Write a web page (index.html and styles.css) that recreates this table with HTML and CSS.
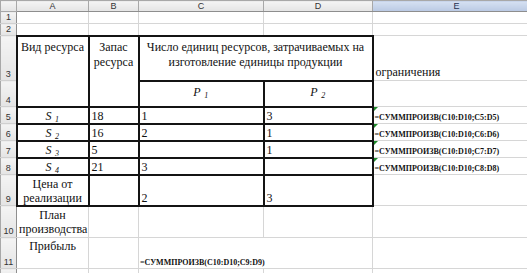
FILE: index.html
```html
<!DOCTYPE html>
<html>
<head>
<meta charset="utf-8">
<link rel="stylesheet" href="styles.css">
</head>
<body>
<table class="sheet">
  <colgroup>
    <col class="c-rh"><col class="c-a"><col class="c-b"><col class="c-c"><col class="c-d"><col class="c-e">
  </colgroup>
  <tr class="r-h">
    <th class="corner"></th><th class="ch">A</th><th class="ch">B</th><th class="ch">C</th><th class="ch">D</th><th class="ch sel">E</th>
  </tr>
  <tr class="r-1"><th class="rh">1</th><td></td><td></td><td></td><td></td><td></td></tr>
  <tr class="r-2"><th class="rh">2</th><td></td><td></td><td></td><td></td><td></td></tr>
  <tr class="r-3">
    <th class="rh">3</th>
    <td class="bx top center" rowspan="2">Вид ресурса</td>
    <td class="bx top center" rowspan="2">Запас ресурса</td>
    <td class="bx top center" colspan="2">Число единиц ресурсов, затрачиваемых на изготовление единицы продукции</td>
    <td class="plain">ограничения</td>
  </tr>
  <tr class="r-4">
    <th class="rh">4</th>
    <td class="bx top center"><span class="var">P<sub>1</sub></span></td>
    <td class="bx top center"><span class="var">P<sub>2</sub></span></td>
    <td></td>
  </tr>
  <tr class="r-5">
    <th class="rh">5</th>
    <td class="bx center"><span class="var">S<sub>1</sub></span></td>
    <td class="bx">18</td><td class="bx">1</td><td class="bx">3</td>
    <td class="formula flag">=СУММПРОИЗВ(C10:D10;C5:D5)</td>
  </tr>
  <tr class="r-5">
    <th class="rh">6</th>
    <td class="bx center"><span class="var">S<sub>2</sub></span></td>
    <td class="bx">16</td><td class="bx">2</td><td class="bx">1</td>
    <td class="formula flag">=СУММПРОИЗВ(C10:D10;C6:D6)</td>
  </tr>
  <tr class="r-5">
    <th class="rh">7</th>
    <td class="bx center"><span class="var">S<sub>3</sub></span></td>
    <td class="bx">5</td><td class="bx"></td><td class="bx">1</td>
    <td class="formula flag">=СУММПРОИЗВ(C10:D10;C7:D7)</td>
  </tr>
  <tr class="r-5">
    <th class="rh">8</th>
    <td class="bx center"><span class="var">S<sub>4</sub></span></td>
    <td class="bx">21</td><td class="bx">3</td><td class="bx"></td>
    <td class="formula flag">=СУММПРОИЗВ(C10:D10;C8:D8)</td>
  </tr>
  <tr class="r-9">
    <th class="rh">9</th>
    <td class="bx top2 center">Цена от реализации</td>
    <td class="bb"></td>
    <td class="bx">2</td><td class="bx">3</td>
    <td></td>
  </tr>
  <tr class="r-10">
    <th class="rh">10</th>
    <td class="top2 center">План производства</td>
    <td></td><td></td><td></td><td></td>
  </tr>
  <tr class="r-11">
    <th class="rh">11</th>
    <td class="top2 center">Прибыль</td>
    <td></td>
    <td class="formula overflow" colspan="2">=СУММПРОИЗВ(C10:D10;C9:D9)</td>
    <td></td>
  </tr>
  <tr class="r-12">
    <th class="rh"></th><td></td><td></td><td></td><td></td><td></td>
  </tr>
</table>
</body>
</html>
```
FILE: styles.css
```css
html, body {
  margin: 0;
  padding: 0;
  background: #ffffff;
  overflow: hidden;
}

.sheet {
  border-collapse: collapse;
  table-layout: fixed;
  width: 540px;
  font-family: "Liberation Serif", "Times New Roman", "DejaVu Serif", serif;
  font-size: 12px;
  color: #111;
}

.c-rh { width: 16px; }
.c-a { width: 72px; }
.c-b { width: 50px; }
.c-c { width: 125px; }
.c-d { width: 109px; }
.c-e { width: 168px; }

.sheet td {
  border: 1px solid #d6d6d6;
  padding: 0 2px;
  vertical-align: bottom;
  line-height: 14px;
  white-space: nowrap;
  overflow: hidden;
}

.sheet th {
  font-family: "Liberation Sans", Arial, sans-serif;
  font-weight: normal;
  font-size: 9px;
  color: #333;
  padding: 0;
  background: linear-gradient(#f4f4f4, #e4e4e4);
  border: 1px solid #a8a8a8;
}

.sheet th.ch {
  text-align: center;
  vertical-align: middle;
  line-height: 10px;
  border-bottom-color: #8e8e8e;
}

.sheet th.sel {
  background: linear-gradient(#d6e1f2, #b9c9e3);
  color: #1f2f4f;
}

.sheet th.rh {
  text-align: center;
  vertical-align: bottom;
  line-height: 11px;
  border-right-color: #8e8e8e;
  border-top-color: #d0d0d0;
  border-bottom-color: #d0d0d0;
}

.r-h { height: 11px; }
.r-1, .r-2 { height: 10px; }
.r-3 { height: 45px; }
.r-4 { height: 26px; }
.r-5 { height: 17px; }
.r-9 { height: 29px; }
.r-10 { height: 32px; }
.r-11 { height: 31px; }
.r-12 { height: 10px; }

.sheet td.bx {
  border: 2px solid #141414;
}

.sheet td.bb {
  border-bottom: 2px solid #141414;
}

.sheet td.top {
  vertical-align: top;
  padding-top: 3px;
  white-space: normal;
  line-height: 15px;
}

.sheet td.top2 {
  vertical-align: top;
  padding-top: 1px;
  white-space: normal;
  line-height: 14px;
}

.sheet td.center {
  text-align: center;
}

.sheet td.plain {
  vertical-align: bottom;
  padding-bottom: 1px;
}

.var {
  font-style: italic;
  letter-spacing: 0.5px;
}

.var sub {
  font-size: 8px;
  margin-left: 3px;
  vertical-align: -2px;
  line-height: 0;
}

.sheet td.formula {
  font-size: 8px;
  font-weight: bold;
  line-height: 10px;
  padding-left: 1px;
}

.sheet td.flag {
  position: relative;
}

.sheet td.flag::before {
  content: "";
  position: absolute;
  left: 0;
  top: 0;
  border-top: 4px solid #1f8a2a;
  border-right: 4px solid transparent;
}

.sheet td.overflow {
  overflow: visible;
}
```
